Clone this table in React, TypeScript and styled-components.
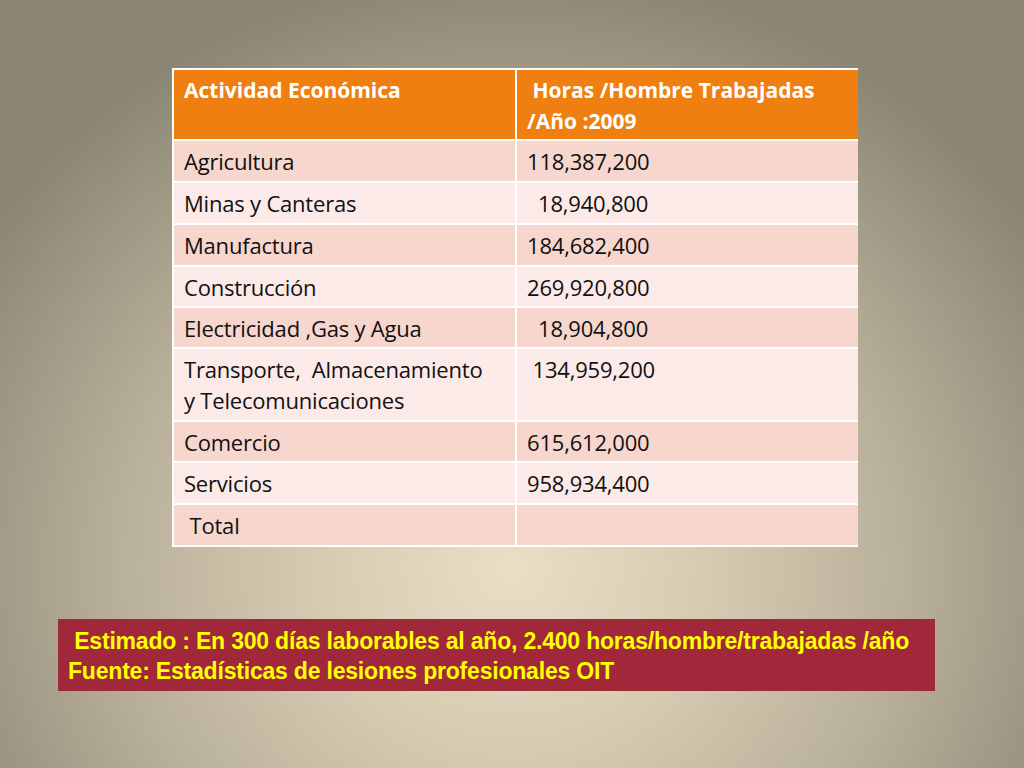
import React from 'react';
import styled, { createGlobalStyle } from 'styled-components';

const GlobalStyle = createGlobalStyle`
  html, body {
    margin: 0;
    padding: 0;
  }
  body {
    font-family: 'Open Sans', 'Liberation Sans', sans-serif;
  }
`;

const Slide = styled.div`
  width: 1024px;
  height: 768px;
  overflow: hidden;
  box-sizing: border-box;
  padding-top: 68px;
  background: radial-gradient(
    ellipse 62% 78% at 50% 74%,
    #e8dfc6 0%,
    #d6ccb2 30%,
    #b9b09a 62%,
    #8a8574 100%
  );
  display: flex;
  flex-direction: column;
`;

const Table = styled.div`
  align-self: flex-start;
  margin-left: 172px;
  width: 686px;
  box-sizing: border-box;
  padding: 2px;
  gap: 2px;
  background: #ffffff;
  display: grid;
  grid-template-columns: 341px 341px;
`;

const Cell = styled.div<{ $tone: 'head' | 'odd' | 'even'; $h: number }>`
  height: ${p => p.$h}px;
  box-sizing: border-box;
  padding: 5px 10px 0;
  font-size: ${p => (p.$tone === 'head' ? 21 : 22)}px;
  line-height: 31px;
  white-space: pre;
  color: ${p => (p.$tone === 'head' ? '#ffffff' : '#111111')};
  font-weight: ${p => (p.$tone === 'head' ? 700 : 400)};
  letter-spacing: ${p => (p.$tone === 'head' ? 0 : -0.2)}px;
  background: ${p =>
    p.$tone === 'head' ? '#ef7f10' : p.$tone === 'odd' ? '#f7d6ce' : '#fbeae7'};
`;

const Note = styled.div`
  margin: 72px 0 0 58px;
  width: 877px;
  height: 72px;
  box-sizing: border-box;
  padding: 7px 10px 0;
  background: #a0283a;
  color: #ffff00;
  font-family: 'Liberation Sans', sans-serif;
  font-weight: 700;
  font-size: 23px;
  line-height: 30px;
  letter-spacing: -0.2px;
  white-space: pre;
`;

const rows: [string, string, number][] = [
  ['Agricultura', '118,387,200', 40],
  ['Minas y Canteras', '  18,940,800', 40],
  ['Manufactura', '184,682,400', 40],
  ['Construcción', '269,920,800', 39],
  ['Electricidad ,Gas y Agua', '  18,904,800', 39],
  ['Transporte,  Almacenamiento\ny Telecomunicaciones', ' 134,959,200', 71],
  ['Comercio', '615,612,000', 39],
  ['Servicios', '958,934,400', 40],
  [' Total', '', 40],
];

export default function App() {
  return (
    <>
      <GlobalStyle />
      <Slide>
        <Table>
          <Cell $tone="head" $h={69}>Actividad Económica</Cell>
          <Cell $tone="head" $h={69}>{' Horas /Hombre Trabajadas\n/Año :2009'}</Cell>
          {rows.map(([name, value, h], i) => {
            const tone = i % 2 === 0 ? 'odd' : 'even';
            return (
              <React.Fragment key={name}>
                <Cell $tone={tone} $h={h}>{name}</Cell>
                <Cell $tone={tone} $h={h}>{value}</Cell>
              </React.Fragment>
            );
          })}
        </Table>
        <Note>
          {' Estimado : En 300 días laborables al año, 2.400 horas/hombre/trabajadas /año\nFuente: Estadísticas de lesiones profesionales OIT'}
        </Note>
      </Slide>
    </>
  );
}
